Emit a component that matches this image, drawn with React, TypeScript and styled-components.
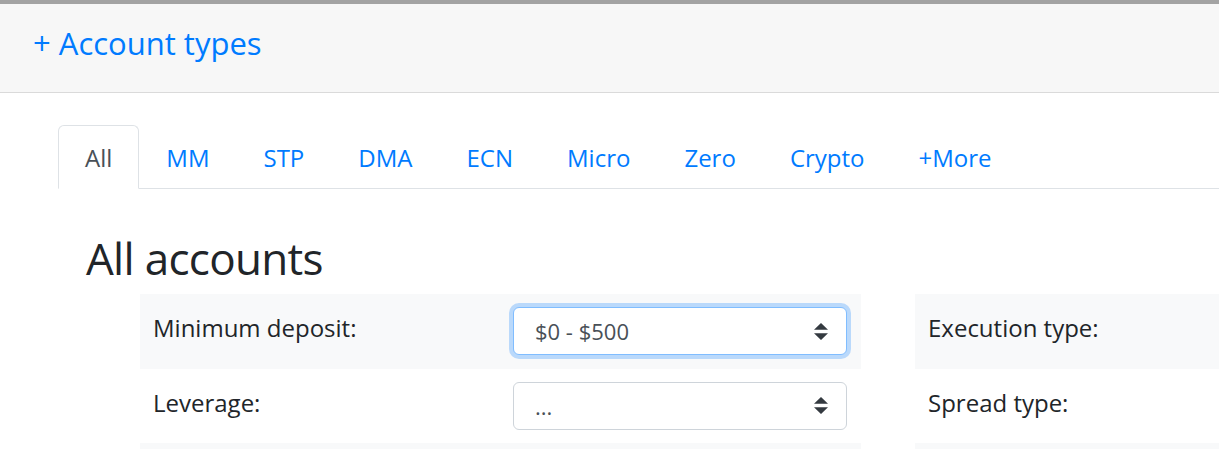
import React from "react";
import styled, { createGlobalStyle } from "styled-components";

const Global = createGlobalStyle`
  html, body { margin: 0; padding: 0; background: #fff; overflow: hidden; }
  body { font-family: "Open Sans", "Noto Sans", sans-serif; color: #212529; }
  * { box-sizing: border-box; }
`;

const Page = styled.div`
  width: 100vw;
  height: 100vh;
  overflow: hidden;
`;

const Header = styled.header`
  border-top: 4px solid #a3a3a3;
  border-bottom: 1px solid #dadada;
  background: #f7f7f7;
  height: 93px;
  display: flex;
  align-items: center;
  padding-left: 33px;
`;

const HeaderLink = styled.a`
  color: #007bff;
  font-size: 31px;
  line-height: 1;
  text-decoration: none;
  padding-bottom: 10px;
`;

const Main = styled.main`
  padding: 32px 0 0 58px;
  width: 1700px;
`;

const Nav = styled.nav`
  display: flex;
  border-bottom: 1px solid #dee2e6;
  width: 1161px;
`;

const Tab = styled.a<{ $active?: boolean }>`
  display: block;
  padding: 14px 26px 12px;
  font-size: 24px;
  line-height: 36px;
  margin-bottom: -1px;
  border: 1px solid ${(p) => (p.$active ? "#dee2e6" : "transparent")};
  border-bottom-color: ${(p) => (p.$active ? "#fff" : "transparent")};
  border-radius: 6px 6px 0 0;
  background: ${(p) => (p.$active ? "#fff" : "transparent")};
  color: ${(p) => (p.$active ? "#495057" : "#007bff")};
  text-decoration: none;
`;

const Title = styled.h2`
  margin: 41px 0 0 28px;
  font-size: 44px;
  letter-spacing: -0.7px;
  font-weight: 400;
  line-height: 57px;
`;

const Grid = styled.div`
  display: grid;
  grid-template-columns: 721px 721px;
  column-gap: 54px;
  margin: 7px 0 0 82px;
`;

const Column = styled.div`
  display: flex;
  flex-direction: column;
`;

const Row = styled.div<{ $shaded?: boolean }>`
  display: flex;
  align-items: center;
  height: 74.5px;
  padding: 0 14px 0 13px;
  background: ${(p) => (p.$shaded ? "#f8f9fa" : "#fff")};
`;

const Label = styled.div`
  width: 360px;
  font-size: 24px;
  line-height: 36px;
  margin-top: -6px;
`;

const Select = styled.div<{ $focus?: boolean }>`
  width: 334px;
  height: 48px;
  margin-left: auto;
  display: flex;
  align-items: center;
  justify-content: space-between;
  padding: 0 18px 0 21px;
  border: 1px solid ${(p) => (p.$focus ? "#80bdff" : "#ced4da")};
  border-radius: 6px;
  background: #fff;
  box-shadow: ${(p) => (p.$focus ? "0 0 0 4px rgba(0,123,255,.25)" : "none")};
  color: #495057;
  font-size: 22px;
`;

const Arrows = () => (
  <svg width="14" height="17" viewBox="0 0 4 5" preserveAspectRatio="none">
    <path fill="#343a40" d="M2 0L0 2h4zm0 5L0 3h4z" />
  </svg>
);

const tabs = ["All", "MM", "STP", "DMA", "ECN", "Micro", "Zero", "Crypto", "+More"];

export default function App() {
  return (
    <Page>
      <Global />
      <Header>
        <HeaderLink href="#">+ Account types</HeaderLink>
      </Header>
      <Main>
        <Nav>
          {tabs.map((t, i) => (
            <Tab key={t} href="#" $active={i === 0}>
              {t}
            </Tab>
          ))}
        </Nav>
        <Title>All accounts</Title>
        <Grid>
          <Column>
            <Row $shaded>
              <Label>Minimum deposit:</Label>
              <Select $focus>
                <span>$0 - $500</span>
                <Arrows />
              </Select>
            </Row>
            <Row>
              <Label>Leverage:</Label>
              <Select>
                <span>...</span>
                <Arrows />
              </Select>
            </Row>
            <Row $shaded />
          </Column>
          <Column>
            <Row $shaded>
              <Label>Execution type:</Label>
            </Row>
            <Row>
              <Label>Spread type:</Label>
            </Row>
            <Row $shaded />
          </Column>
        </Grid>
      </Main>
    </Page>
  );
}
